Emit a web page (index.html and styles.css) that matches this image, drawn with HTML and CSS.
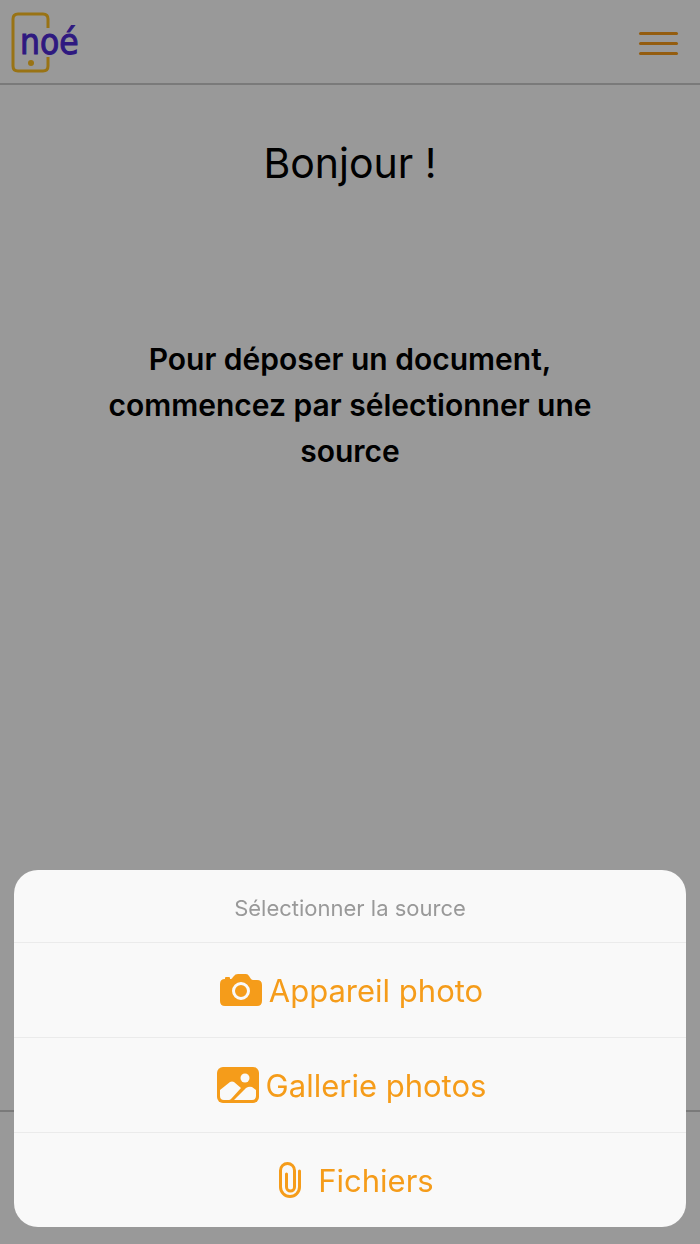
FILE: index.html
```html
<!doctype html>
<html lang="fr">
    <head>
        <title>noé</title>
        <meta charset="utf-8">
        <meta name="viewport" content="width=device-width, initial-scale=1">
        <link rel="stylesheet" href="styles.css">
    </head>

    <body>
        <div class="page">
            <header>
                <a class="logo" href="/" aria-label="noé">
                    <svg width="72" height="62" viewBox="0 0 72 62">
                        <path class="phone" d="M37 16V7q0-5-5-5H7Q2 2 2 7v47q0 5 5 5h25q5 0 5-5v-9"/>
                        <circle class="dot" cx="20" cy="51" r="3"/>
                        <text x="9" y="42">noé</text>
                    </svg>
                </a>
                <button class="menu" aria-label="Menu">
                    <span></span>
                    <span></span>
                    <span></span>
                </button>
            </header>

            <main>
                <h1>Bonjour !</h1>
                <p>Pour déposer un document, commencez par sélectionner une source</p>
            </main>

            <footer></footer>
        </div>

        <div class="backdrop">
            <div class="sheet" role="dialog" aria-labelledby="sheet-title">
                <h2 id="sheet-title">Sélectionner la source</h2>
                <button>
                    <svg width="42" height="34" viewBox="0 0 42 34">
                        <path fill="currentColor" d="M5 6V5q0-1 1-1h3q1 0 1 1v1h1q1 0 2-2l1-1q1-2 4-2h8q2 0 3 2l2 3q1 1 2 1h4q5 0 5 5v16q0 5-5 5H5q-5 0-5-5V11q0-5 5-5z"/>
                        <circle cx="21" cy="18" r="7.5" fill="currentColor" stroke="#f9f9f9" stroke-width="3"/>
                    </svg>
                    Appareil photo
                </button>
                <button>
                    <svg width="42" height="36" viewBox="0 0 42 36">
                        <rect width="42" height="36" rx="6" fill="currentColor"/>
                        <circle cx="28" cy="11" r="4.5" fill="#f9f9f9"/>
                        <path fill="#f9f9f9" d="M3 23l10-8q2-1 4 0l7 6-10 11q-1 1-2 1H7q-4 0-4-4zM17 33l12-12q3-2 6-1l4 3v6q0 4-4 4z"/>
                    </svg>
                    Gallerie photos
                </button>
                <button>
                    <svg width="42" height="36" viewBox="0 0 42 36">
                        <path fill="none" stroke="currentColor" stroke-width="3" stroke-linecap="round" d="M30.5 9v16a9.500 9.500 0 0 1-19 0V8.500a7 7 0 0 1 14 0V25a4 4 0 0 1-8 0V12"/>
                    </svg>
                    Fichiers
                </button>
            </div>
        </div>
    </body>
</html>
```
FILE: styles.css
```css
* {
    box-sizing: border-box;
}

body {
    margin: 0;
    color: #000;
    background: #fff;
    font-family: Inter, "Liberation Sans", sans-serif;
}

button {
    border: 0;
    background: none;
    font-family: inherit;
    cursor: pointer;
}

.page {
    display: flex;
    flex-direction: column;
    min-height: 100vh;
}

header {
    display: flex;
    align-items: center;
    justify-content: space-between;
    height: 85px;
    padding: 3px 22px 0 11px;
    border-bottom: 2px solid #ccc;
}

.logo svg {
    display: block;
}

.logo text {
    fill: #4d2bd6;
    stroke: #4d2bd6;
    stroke-width: 1px;
    font-family: "DejaVu Sans Condensed", "Liberation Sans", sans-serif;
    font-size: 35px;
}

.phone {
    fill: none;
    stroke: #ffc023;
    stroke-width: 3px;
}

.dot {
    fill: #ffc023;
}

.menu {
    display: flex;
    flex-direction: column;
    gap: 7px;
    width: 39px;
    padding: 0;
}

.menu span {
    height: 3px;
    border-radius: 2px;
    background: #f79b1b;
}

main {
    flex: 1;
    padding: 0 96px;
    text-align: center;
}

h1 {
    margin: 50px 0 145px;
    font-size: 41px;
    line-height: 56px;
    font-weight: normal;
}

main p {
    margin: 0;
    font-size: 30px;
    line-height: 46px;
    font-weight: 600;
}

footer {
    height: 134px;
    border-top: 2px solid #ccc;
}

.backdrop {
    position: fixed;
    inset: 0;
    display: flex;
    flex-direction: column;
    justify-content: flex-end;
    padding: 14px 14px 17px;
    background: rgba(0, 0, 0, 0.4);
}

.sheet {
    overflow: hidden;
    border-radius: 24px;
    background: #f9f9f9;
}

.sheet h2 {
    margin: 0;
    padding: 24px 16px 20px;
    color: #999;
    font-size: 22px;
    line-height: 28px;
    font-weight: normal;
    text-align: center;
}

.sheet button {
    display: flex;
    align-items: center;
    justify-content: center;
    gap: 7px;
    width: 100%;
    height: 95px;
    padding: 0 4px 0 7px;
    border-top: 1px solid #ebebeb;
    color: #f59c1a;
    font-size: 31px;
}
```
